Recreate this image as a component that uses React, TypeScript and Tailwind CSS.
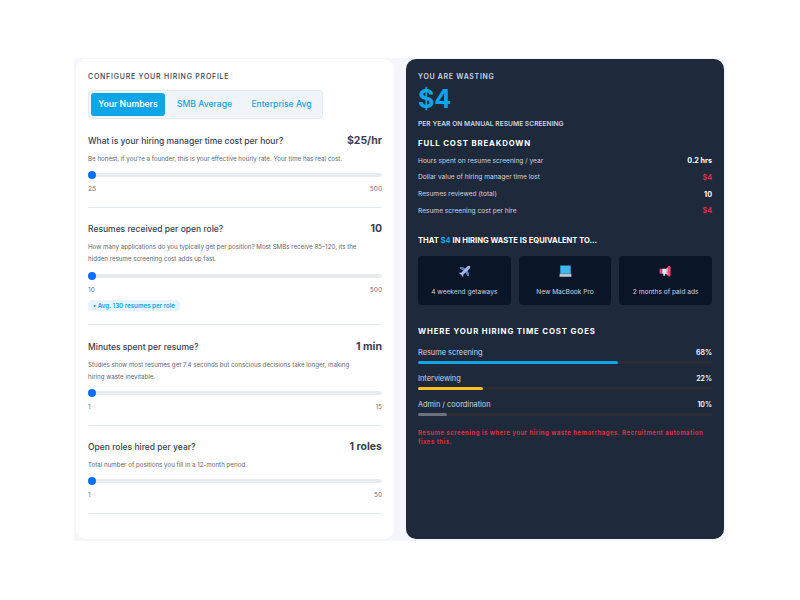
import React from "react";

function Slider({ min, max }: { min: string; max: string }) {
  return (
    <div>
      <div className="relative h-[4px] rounded-full bg-[#e9ecef]">
        <div className="absolute left-0 top-[-2px] h-[8px] w-[8px] rounded-full bg-[#0d6efd]" />
      </div>
      <div className="mt-[7px] flex justify-between text-[6.5px] leading-[10px] text-[#6b7280]">
        <span>{min}</span>
        <span>{max}</span>
      </div>
    </div>
  );
}

function Question({ title, value, desc, min, max, children }: { title: string; value: string; desc: React.ReactNode; min: string; max: string; children?: React.ReactNode }) {
  return (
    <div className="border-b border-[#e2e8f0] pb-[12.5px] pt-[14.3px]">
      <div className="flex items-center justify-between">
        <span className="text-[8.5px] font-medium leading-[14px] text-[#374151]">{title}</span>
        <span className="text-[10.5px] font-bold leading-[14px] text-[#374151]">{value}</span>
      </div>
      <p className="mb-[8.5px] mt-[5px] whitespace-nowrap text-[6.2px] leading-[12px] text-[#5f6672]">{desc}</p>
      <Slider min={min} max={max} />
      {children}
    </div>
  );
}

function Row({ label, value, red }: { label: string; value: string; red?: boolean }) {
  return (
    <div className="flex h-[16.6px] items-center justify-between">
      <span className="text-[6.6px] text-[#cbd5e1]">{label}</span>
      <span className={red ? "text-[7.2px] font-bold text-[#dc2f45]" : "text-[7.2px] font-bold text-white"}>{value}</span>
    </div>
  );
}

function Equivalent({ icon, label }: { icon: React.ReactNode; label: string }) {
  return (
    <div className="flex h-[49px] flex-1 flex-col items-center rounded-[4px] bg-[#0a1628] pt-[9px]">
      <div className="flex h-[14px] items-center">{icon}</div>
      <span className="mt-[8px] text-[6.6px] leading-[10px] text-[#cbd5e1]">{label}</span>
    </div>
  );
}

function Bar({ label, pct, color, width }: { label: string; pct: string; color: string; width: string }) {
  return (
    <div className="mb-[8px]">
      <div className="flex h-[14px] items-center justify-between">
        <span className="text-[7.4px] text-[#cbd5e1]">{label}</span>
        <span className="text-[7px] font-semibold text-white">{pct}</span>
      </div>
      <div className="mt-[1px] h-[3px] rounded-full bg-[#2a2d33]">
        <div className={`h-full rounded-full ${color}`} style={{ width }} />
      </div>
    </div>
  );
}

export default function App() {
  return (
    <div className="flex min-h-[600px] items-start justify-center bg-white pt-[58px] [font-family:Inter,'Liberation_Sans',sans-serif]">
      <div className="flex h-[483px] w-[652px] bg-[#f4f6fb]">
        <div className="ml-[2px] mt-[1px] h-[480px] w-[318px] rounded-[10px] bg-white px-[12px] pt-[13px]">
          <div className="text-[7px] font-medium uppercase leading-[10px] tracking-[0.11em] text-[#374151]">Configure your hiring profile</div>
          <div className="mb-[0.7px] mt-[8px] flex h-[29px] w-[235px] items-center rounded-[4px] border border-[#e2e8f0] bg-[#f1f5f9] px-[2px] text-[8.6px] font-medium text-[#0ea5e9]">
            <div className="flex h-[23px] w-[74px] items-center justify-center rounded-[3px] bg-[#0ea5e9] font-semibold text-white">Your Numbers</div>
            <div className="w-[79px] text-center">SMB Average</div>
            <div className="w-[75px] text-center">Enterprise Avg</div>
          </div>
          <Question title="What is your hiring manager time cost per hour?" value="$25/hr" desc="Be honest, if you're a founder, this is your effective hourly rate. Your time has real cost." min="25" max="500" />
          <Question
            title="Resumes received per open role?"
            value="10"
            desc={<>How many applications do you typically get per position? Most SMBs receive 85–120, its the<br />hidden resume screening cost adds up fast.</>}
            min="10"
            max="500"
          >
            <div className="mb-[1px] mt-[5px] h-[11px] w-fit rounded-[4px] bg-[#e6f5fd] px-[5px] text-[6.2px] font-semibold leading-[11px] text-[#0ea5e9]">• Avg. 130 resumes per role</div>
          </Question>
          <Question
            title="Minutes spent per resume?"
            value="1 min"
            desc={<>Studies show most resumes get 7.4 seconds but conscious decisions take longer, making<br />hiring waste inevitable.</>}
            min="1"
            max="15"
          />
          <Question title="Open roles hired per year?" value="1 roles" desc="Total number of positions you fill in a 12-month period." min="1" max="50" />
        </div>
        <div className="ml-[12px] mt-[1px] h-[480px] w-[318px] rounded-[10px] bg-[#1e293b] px-[12px] pt-[13px]">
          <div className="text-[7px] font-semibold uppercase leading-[10px] tracking-[0.1em] text-[#cbd5e1]">You are wasting</div>
          <div className="mt-[2px] text-[25px] font-bold leading-[30px] text-[#0ea5e9]">$4</div>
          <div className="mt-[5px] text-[6.7px] font-semibold uppercase leading-[10px] text-[#cbd5e1]">Per year on manual resume screening</div>
          <div className="mt-[9px] text-[7.8px] font-bold uppercase leading-[10px] tracking-[0.11em] text-white">Full cost breakdown</div>
          <div className="mt-[5.5px]">
            <Row label="Hours spent on resume screening / year" value="0.2 hrs" />
            <Row label="Dollar value of hiring manager time lost" value="$4" red />
            <Row label="Resumes reviewed (total)" value="10" />
            <Row label="Resume screening cost per hire" value="$4" red />
          </div>
          <div className="mt-[16.6px] text-[7.6px] font-bold uppercase leading-[10px] text-white">
            That <span className="text-[#0ea5e9]">$4</span> in hiring waste is equivalent to...
          </div>
          <div className="mt-[9.4px] flex gap-[8px]">
            <Equivalent
              label="4 weekend getaways"
              icon={
                <svg width="13" height="13" viewBox="0 0 12 12">
                  <path d="M11 1c-.6-.6-1.6-.4-2.2.2L7 3 2.6 1.8 1.6 2.8 5 5 3 7.2 1.6 7 1 7.6l2 1.4 1.4 2 .6-.6-.2-1.4L7 7l2.2 3.4 1-1L9 5l1.8-1.8C11.4 2.6 11.6 1.6 11 1z" fill="#a9b4e8" />
                  <path d="M7 3 2.6 1.8 1.6 2.8 5 5zM9 5l1.2 4.4-1 1L7 7z" fill="#3b88c3" />
                </svg>
              }
            />
            <Equivalent
              label="New MacBook Pro"
              icon={
                <svg width="13" height="13" viewBox="0 0 12 12">
                  <rect x="1.2" y="0.5" width="9.6" height="7.5" fill="#3db8ef" />
                  <rect x="0.5" y="8" width="11" height="3" fill="#aab2c0" />
                  <rect x="1" y="8.8" width="10" height="1" fill="#ccd3dc" />
                </svg>
              }
            />
            <Equivalent
              label="2 months of paid ads"
              icon={
                <svg width="13" height="13" viewBox="0 0 12 12">
                  <rect x="0.5" y="3.5" width="2.5" height="4.5" fill="#f0447a" />
                  <path d="M3 3.5h3.5v4.5H5.5v2H4V8H3z" fill="#e6e9f0" />
                  <path d="M6.5 3.5 8.2 2v8L6.5 8z" fill="#d9c6d2" />
                  <rect x="8.2" y="1" width="2.5" height="9.5" rx="1" fill="#f0447a" />
                </svg>
              }
            />
          </div>
          <div className="mb-[10px] mt-[21px] text-[7.8px] font-bold uppercase leading-[10px] tracking-[0.11em] text-white">Where your hiring time cost goes</div>
          <Bar label="Resume screening" pct="68%" color="bg-[#0ea5e9]" width="68%" />
          <Bar label="Interviewing" pct="22%" color="bg-[#fbbf24]" width="22%" />
          <Bar label="Admin / coordination" pct="10%" color="bg-[#6b7280]" width="10%" />
          <div className="mt-[12px] text-[6px] font-bold leading-[9px] tracking-[0.08em] text-[#dc2f45]">Resume screening is where your hiring waste hemorrhages. Recruitment automation fixes this.</div>
        </div>
      </div>
    </div>
  );
}
